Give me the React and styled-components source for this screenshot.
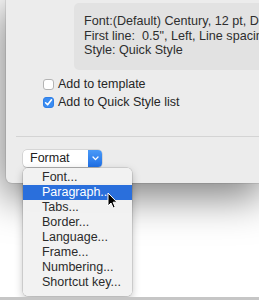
import React from 'react';
import styled, { createGlobalStyle } from 'styled-components';

const Global = createGlobalStyle`
  html, body { margin: 0; padding: 0; background: #fff; }
  body { font-family: "Liberation Sans", Arial, sans-serif; }
`;

const menuItems = ['Font...', 'Paragraph...', 'Tabs...', 'Border...', 'Language...', 'Frame...', 'Numbering...', 'Shortcut key...'];

const App = () => (
  <Page>
    <Global />
    <Dialog>
      <Description>
        <Line>Font:(Default) Century, 12 pt, Do not check spelling</Line>
        <Line>First line:&nbsp; 0.5", Left, Line spacing: single</Line>
        <Line>Style: Quick Style</Line>
      </Description>
      <Checks>
        <CheckRow>
          <Box />
          <Label>Add to template</Label>
        </CheckRow>
        <CheckRow>
          <Box $checked>
            <svg width="9" height="9" viewBox="0 0 9 9">
              <path d="M1.6 4.8 L3.6 6.8 L7.5 1.8" fill="none" stroke="#fff" strokeWidth="1.6" strokeLinecap="round" strokeLinejoin="round" />
            </svg>
          </Box>
          <Label>Add to Quick Style list</Label>
        </CheckRow>
      </Checks>
      <Separator />
      <PopupWrap>
        <Popup>
          <PopupText>Format</PopupText>
          <PopupArrow>
            <svg width="7" height="5" viewBox="0 0 7 5">
              <path d="M1 1 L3.5 3.6 L6 1" fill="none" stroke="#fff" strokeWidth="1.3" strokeLinecap="round" strokeLinejoin="round" />
            </svg>
          </PopupArrow>
        </Popup>
        <Menu>
          {menuItems.map((item) => (
            <MenuItem key={item} $active={item === 'Paragraph...'}>{item}</MenuItem>
          ))}
          <Cursor width="11" height="17" viewBox="0 0 11 17">
            <path d="M1 1 L1 14 L4 11 L6.2 16 L8.2 15.1 L6.1 10.2 L10 10.2 Z" fill="#000" stroke="#fff" strokeWidth="1" strokeLinejoin="round" />
          </Cursor>
        </Menu>
      </PopupWrap>
    </Dialog>
  </Page>
);

const Page = styled.div`
  position: relative;
  width: 259px;
  height: 300px;
  overflow: hidden;
  background: #fff;
  box-sizing: border-box;
  border-bottom: 3px solid #c6c6c6;
`;

const Dialog = styled.div`
  margin-left: 6px;
  height: 183px;
  box-sizing: border-box;
  padding-top: 3px;
  background: #ececec;
  border-bottom-left-radius: 6px;
  box-shadow: 0 0 0 1px rgba(0, 0, 0, 0.08), 0 10px 40px 4px rgba(0, 0, 0, 0.5);
  display: flex;
  flex-direction: column;
`;

const Description = styled.div`
  margin-left: 68px;
  height: 67px;
  box-sizing: border-box;
  padding: 11px 0 0 10px;
  background: #e2e2e2;
  border-radius: 5px 0 0 5px;
  white-space: nowrap;
  overflow: hidden;
`;

const Line = styled.div`
  font-size: 12.6px;
  line-height: 14.5px;
  color: #2e2e2e;
`;

const Checks = styled.div`
  margin-top: 5px;
  margin-left: 37px;
  display: flex;
  flex-direction: column;
`;

const CheckRow = styled.div`
  height: 18px;
  display: flex;
  align-items: center;
  gap: 4px;
`;

const Box = styled.span`
  width: 11px;
  height: 11px;
  box-sizing: border-box;
  border-radius: 3px;
  display: flex;
  align-items: center;
  justify-content: center;
  background: ${(p) => (p.$checked ? '#3a8cf2' : '#fff')};
  border: 1px solid ${(p) => (p.$checked ? '#2f7fe6' : '#b4b4b4')};
`;

const Label = styled.span`
  font-size: 12.5px;
  color: #262626;
`;

const Separator = styled.div`
  margin-top: 25px;
  margin-left: 10px;
  height: 1px;
  background: #d4d4d4;
`;

const PopupWrap = styled.div`
  position: relative;
  margin-top: 13px;
  margin-left: 17px;
  width: 79px;
`;

const Popup = styled.div`
  height: 17px;
  display: flex;
  border-radius: 4px;
  box-shadow: 0 0 0 0.5px rgba(0, 0, 0, 0.18), 0 1px 1px rgba(0, 0, 0, 0.12);
  background: #fff;
  overflow: hidden;
`;

const PopupText = styled.span`
  flex: 1;
  padding-left: 7px;
  font-size: 12.5px;
  line-height: 17px;
  color: #222;
`;

const PopupArrow = styled.span`
  width: 14px;
  display: flex;
  align-items: center;
  justify-content: center;
  background: linear-gradient(#4a9af7, #1f6fe6);
`;

const Menu = styled.div`
  position: absolute;
  top: 18px;
  left: 0;
  width: 109px;
  padding: 2px 0 6px;
  background: rgba(242, 242, 242, 0.97);
  border-radius: 5px;
  box-shadow: 0 0 0 0.5px rgba(0, 0, 0, 0.2), 0 3px 8px rgba(0, 0, 0, 0.25);
`;

const MenuItem = styled.div`
  height: 15px;
  line-height: 15px;
  padding-left: 19px;
  font-size: 12.5px;
  color: ${(p) => (p.$active ? '#fff' : '#2b2b2b')};
  background: ${(p) => (p.$active ? '#2a6fdc' : 'transparent')};
`;

const Cursor = styled.svg`
  position: absolute;
  left: 84px;
  top: 24px;
`;

export default App;
